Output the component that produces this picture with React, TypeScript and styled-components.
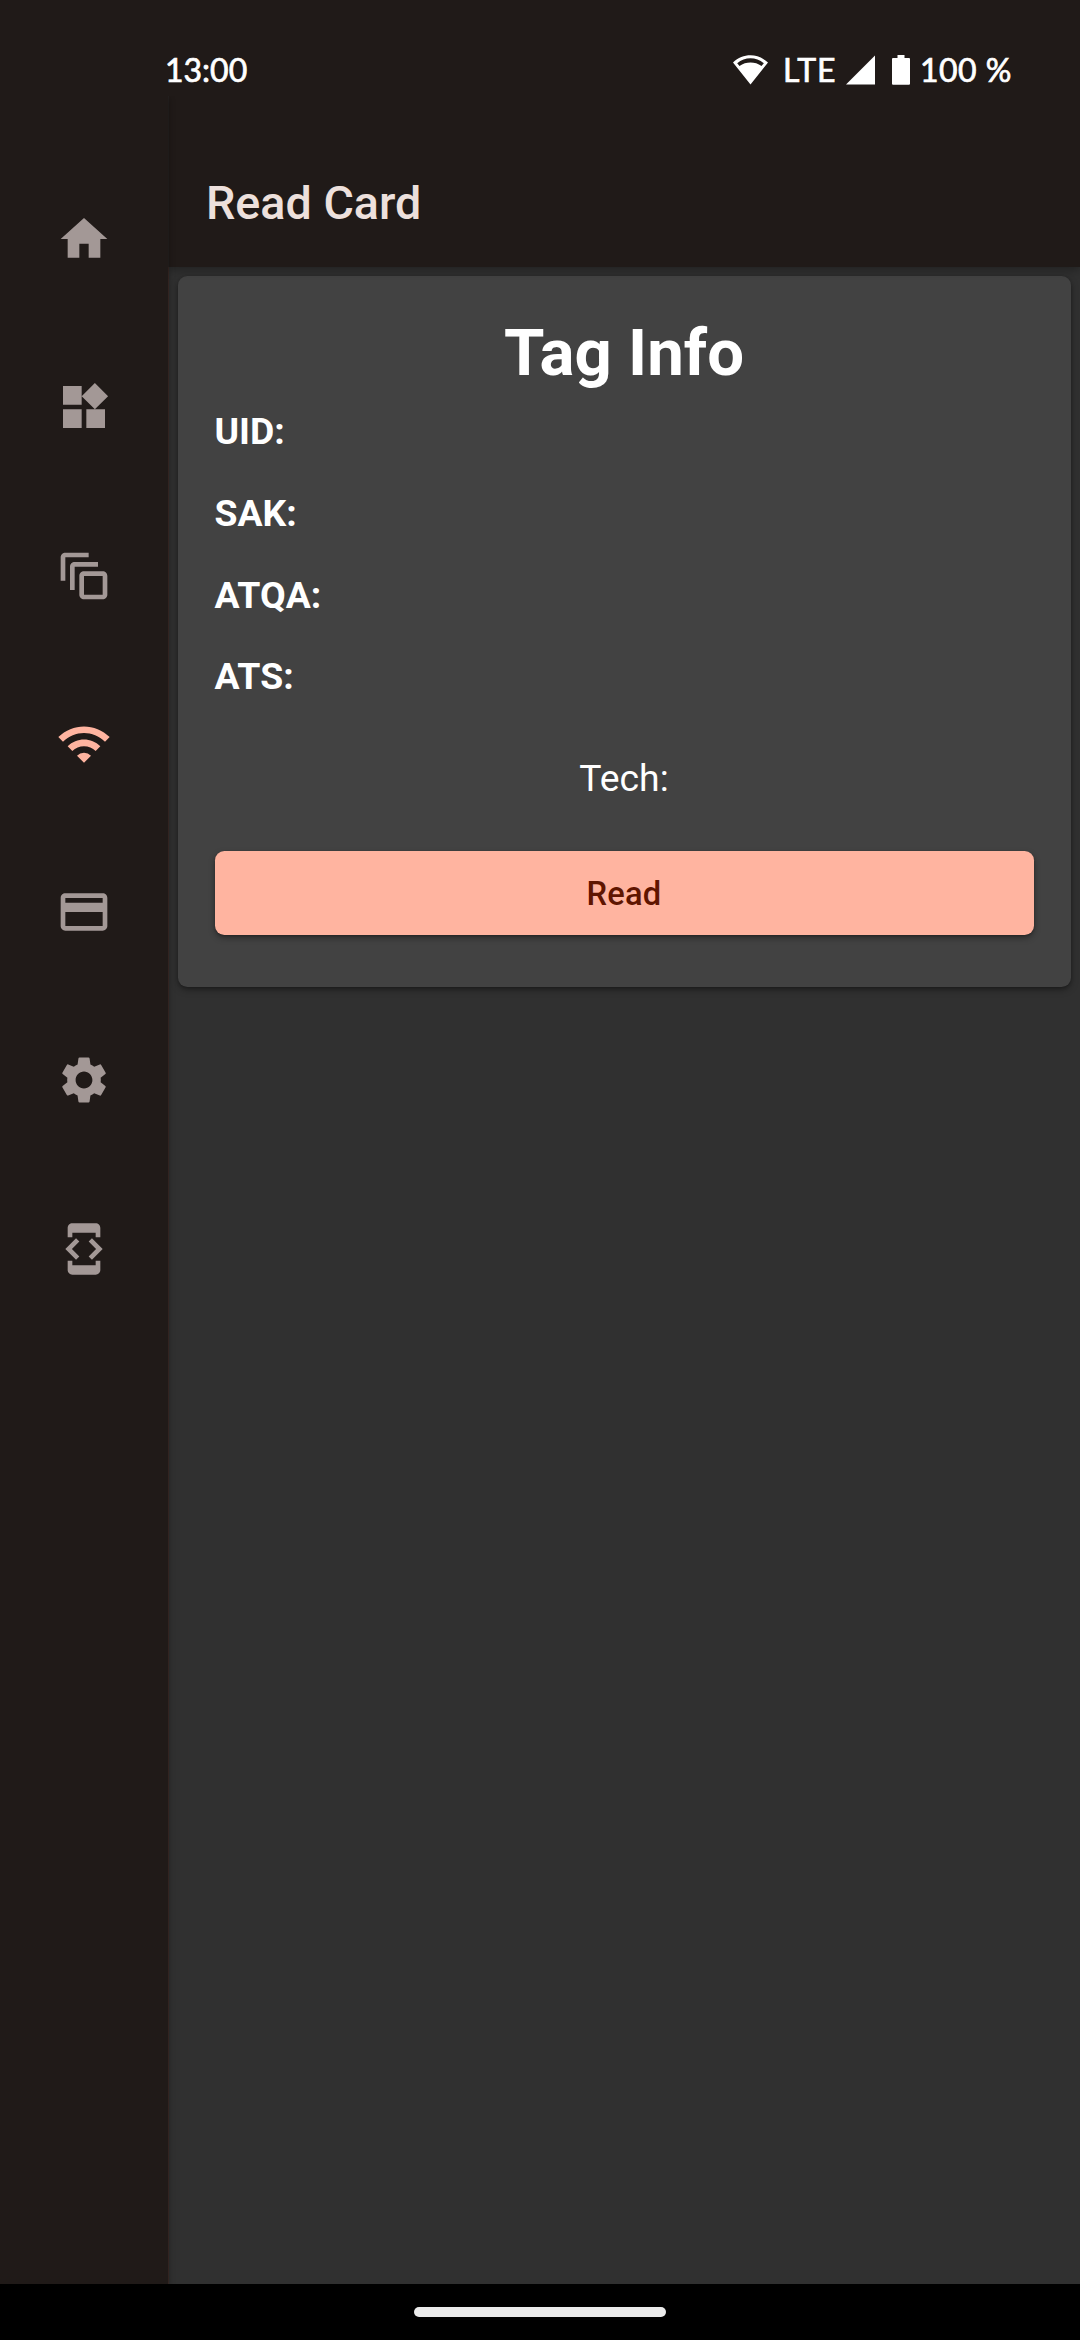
import React from 'react';
import styled, { createGlobalStyle } from 'styled-components';
import {
  MdHome,
  MdWidgets,
  MdOutlineAutoAwesomeMotion,
  MdWifi,
  MdCreditCard,
  MdSettings,
  MdDeveloperMode,
} from 'react-icons/md';

const GlobalStyle = createGlobalStyle`
  *, *::before, *::after { box-sizing: border-box; }
  body { margin: 0; background: #201a18; }
`;

const Screen = styled.div`
  display: flex;
  flex-direction: column;
  width: 1080px;
  height: 2340px;
  overflow: hidden;
  background: #201a18;
  color: #fff;
  font-family: Roboto, 'Liberation Sans', sans-serif;
`;

const StatusBar = styled.header`
  display: flex;
  align-items: center;
  justify-content: space-between;
  height: 96px;
  padding: 44px 68px 0 165px;
  font-family: Lato, 'Open Sans', sans-serif;
  font-size: 32px;
  line-height: 52px;
  -webkit-text-stroke: 0.7px #fff;
`;

const Clock = styled.time`
  letter-spacing: 0;
`;

const StatusGroup = styled.div`
  display: flex;
  align-items: center;

  svg {
    display: block;
    fill: #fff;
    -webkit-text-stroke: 0;
  }
`;

const Network = styled.span`
  margin: 0 9.5px 0 14.5px;
  letter-spacing: 0.9px;
`;

const BatteryLevel = styled.span`
  margin-left: 10px;
  letter-spacing: 0.5px;
`;

const Main = styled.div`
  display: flex;
  flex: 1;
  min-height: 0;
`;

const Rail = styled.nav`
  display: flex;
  flex-direction: column;
  align-items: center;
  gap: 112.28px;
  width: 168px;
  padding-top: 115px;
  position: relative;
  z-index: 3;
  background: #201a18;
  box-shadow: 1px 2px 6px rgba(0, 0, 0, 0.3);
  clip-path: inset(0 -12px 0 0);
`;

const RailItem = styled.a<{ $active?: boolean }>`
  display: block;
  height: 56px;
  font-size: 56px;
  line-height: 0;
  color: ${(p) => (p.$active ? '#ffb4a0' : '#a39896')};
`;

const Content = styled.div`
  display: flex;
  flex: 1;
  flex-direction: column;
  background: #303030;
  border-left: 1px solid #3b2b27;
`;

const AppBar = styled.div`
  height: 171px;
  margin-left: -1px;
  padding: 77px 0 0 37px;
  border-left: 1px solid #252120;
  background: #201a18;
  position: relative;
  z-index: 2;
  box-shadow: 0 3px 9px rgba(0, 0, 0, 0.3);
  clip-path: inset(0 0 -14px 0);
`;

const Title = styled.h1`
  height: 60px;
  margin: -67px 0 0;
  margin: 0;
  color: #ede0dc;
  font-size: 46.67px;
  font-weight: 500;
  line-height: 60px;
`;

const Card = styled.section`
  display: flex;
  flex-direction: column;
  height: 711px;
  margin: 9px 9.5px 0 8.5px;
  padding: 38px 37px 0;
  border-radius: 9.33px;
  background: #424242;
  box-shadow: 0 3px 7px rgba(0, 0, 0, 0.34), 0 1px 3px rgba(0, 0, 0, 0.2);
`;

const CardTitle = styled.h2`
  margin: 0;
  font-size: 65.33px;
  font-weight: 700;
  line-height: 77px;
  text-align: center;
`;

const Fields = styled.dl`
  display: flex;
  flex-direction: column;
  gap: 38px;
  margin: 19px 0 0;
`;

const Field = styled.dt`
  font-size: 37.33px;
  font-weight: 700;
  line-height: 43.8px;
`;

const Tech = styled.p`
  margin: 57px 0 51px;
  font-size: 37.33px;
  line-height: 44px;
  text-align: center;
`;

const ReadButton = styled.button`
  height: 84px;
  padding: 1px 0 0;
  border: 0;
  border-radius: 9.33px;
  background: #ffb4a0;
  color: #5f1500;
  font: 500 32.67px Roboto, sans-serif;
  letter-spacing: 0.23px;
  box-shadow: 0 3px 6px rgba(0, 0, 0, 0.36), 0 1px 2px rgba(0, 0, 0, 0.2);
`;

const NavBar = styled.footer`
  display: flex;
  justify-content: center;
  height: 56px;
  padding-top: 23px;
  background: #000;
`;

const Handle = styled.div`
  width: 252px;
  height: 9.6px;
  border-radius: 5px;
  background: #ebebeb;
`;

const destinations = [
  { name: 'home', Icon: MdHome },
  { name: 'widgets', Icon: MdWidgets },
  { name: 'slots', Icon: MdOutlineAutoAwesomeMotion },
  { name: 'read', Icon: MdWifi },
  { name: 'cards', Icon: MdCreditCard },
  { name: 'settings', Icon: MdSettings },
  { name: 'developer', Icon: MdDeveloperMode },
];

const fields = ['UID:', 'SAK:', 'ATQA:', 'ATS:'];

export default function App() {
  return (
    <>
      <GlobalStyle />
      <Screen>
        <StatusBar>
          <Clock>13:00</Clock>
          <StatusGroup>
            <svg width="35" height="30" viewBox="0 0 35 30">
              <path
                fillRule="evenodd"
                d="M0 7.6C10-2.1 25-2.1 35 7.6L17.5 29.5ZM4.2 8.2L6.5 11C13 6.4 22 6.4 28.5 11L30.8 8.2C23 1.7 12 1.7 4.2 8.2Z"
              />
            </svg>
            <Network>LTE</Network>
            <svg width="29" height="30" viewBox="0 0 29 30">
              <path d="M29 0.5V29.5H0Z" />
            </svg>
            <svg width="35" height="30" viewBox="0 0 35 30">
              <path d="M22.5 0H29.5V3H34Q35 3 35 4V28.7Q35 29.7 34 29.7H18Q17 29.7 17 28.7V4Q17 3 18 3H22.5Z" />
            </svg>
            <BatteryLevel>100 %</BatteryLevel>
          </StatusGroup>
        </StatusBar>
        <Main>
          <Rail>
            {destinations.map(({ name, Icon }) => (
              <RailItem key={name} $active={name === 'read'}>
                <Icon />
              </RailItem>
            ))}
          </Rail>
          <Content>
            <AppBar>
              <Title>Read Card</Title>
            </AppBar>
            <Card>
              <CardTitle>Tag Info</CardTitle>
              <Fields>
                {fields.map((label) => (
                  <Field key={label}>{label}</Field>
                ))}
              </Fields>
              <Tech>Tech:</Tech>
              <ReadButton>Read</ReadButton>
            </Card>
          </Content>
        </Main>
        <NavBar>
          <Handle />
        </NavBar>
      </Screen>
    </>
  );
}
